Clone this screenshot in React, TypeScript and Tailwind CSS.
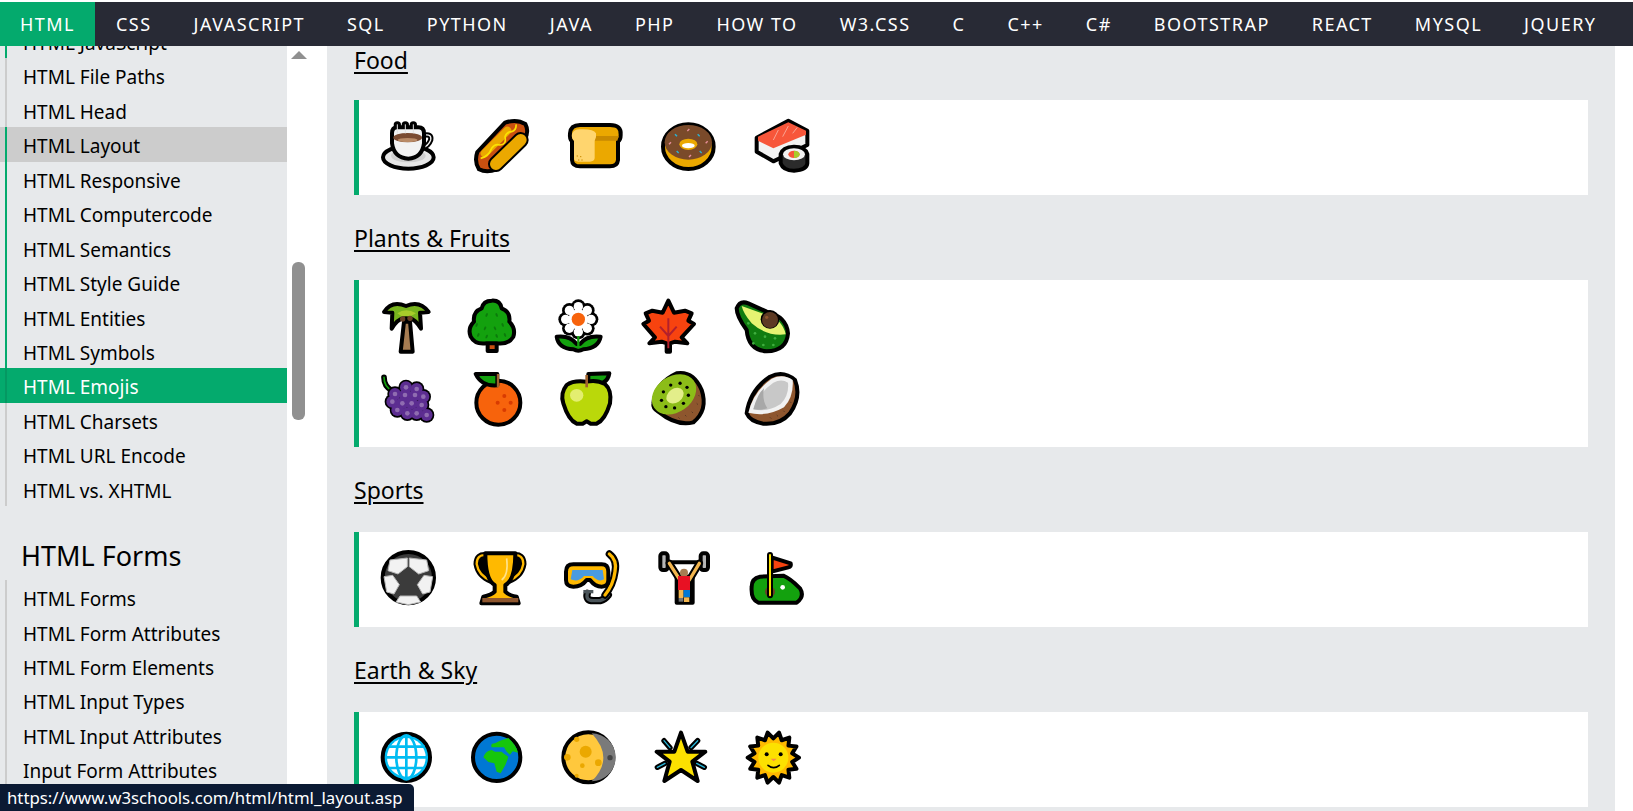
import type { ReactNode } from "react";

const navItems = ["HTML", "CSS", "JAVASCRIPT", "SQL", "PYTHON", "JAVA", "PHP", "HOW TO", "W3.CSS", "C", "C++", "C#", "BOOTSTRAP", "REACT", "MYSQL", "JQUERY"];

const htmlLinks = ["HTML JavaScript", "HTML File Paths", "HTML Head", "HTML Layout", "HTML Responsive", "HTML Computercode", "HTML Semantics", "HTML Style Guide", "HTML Entities", "HTML Symbols", "HTML Emojis", "HTML Charsets", "HTML URL Encode", "HTML vs. XHTML"];
const formLinks = ["HTML Forms", "HTML Form Attributes", "HTML Form Elements", "HTML Input Types", "HTML Input Attributes", "Input Form Attributes"];

const black = { stroke: "#000", strokeWidth: 12, strokeLinejoin: "round" as const, strokeLinecap: "round" as const };

// artwork is drawn in 3x coordinates, x/y is the top left corner of the 60px box
function Emoji({ x, y, className, children }: { x: number; y: number; className: string; children: ReactNode }) {
  return (
    <div className={className}>
      <svg width="60" height="60" viewBox={`${x} ${y} 180 180`} className="block overflow-visible">
        {children}
      </svg>
    </div>
  );
}

function Tube({ d, fill, w }: { d: string; fill: string; w: number }) {
  return (
    <>
      <path d={d} fill="none" stroke="#000" strokeWidth={w + 12} strokeLinecap="round" strokeLinejoin="round" />
      <path d={d} fill="none" stroke={fill} strokeWidth={w} strokeLinecap="round" strokeLinejoin="round" />
    </>
  );
}

function Coffee() {
  return (
    <Emoji x={54} y={78} className="w-[95px]">
      <ellipse cx="145" cy="202" rx="76" ry="34" fill="#e6e6e6" {...black} />
      <ellipse cx="145" cy="197" rx="52" ry="20" fill="#cfcfcf" />
      <Tube d="M190 136 Q216 130 212 150 Q206 168 186 174" fill="#f2f2f2" w={4} />
      <circle cx="112" cy="105" r="11" fill="#000" />
      <circle cx="136" cy="105" r="11" fill="#000" />
      <circle cx="160" cy="105" r="11" fill="#000" />
      <path d="M96 130 Q96 112 112 112 L175 112 Q192 112 192 130 L192 160 Q186 204 145 206 Q102 204 96 160 Z" fill="#f2f2f2" {...black} />
      <ellipse cx="143" cy="143" rx="43" ry="14" fill="#7a4a30" />
      <ellipse cx="143" cy="150" rx="30" ry="6" fill="#b98a66" />
      <path d="M112 130 L112 103 M136 130 L136 103 M160 130 L160 103" stroke="#e2e2e2" strokeWidth="3" fill="none" />
    </Emoji>
  );
}

function Hotdog() {
  return (
    <Emoji x={339} y={78} className="w-[93px]">
      <path d="M352 186 L435 98 Q470 86 496 102 Q508 125 494 148 L410 238 Q380 250 357 238 Q342 215 352 186 Z" fill="#ca5010" {...black} />
      <path d="M374 190 L442 122" stroke="#eba800" strokeWidth="24" strokeLinecap="round" />
      <path d="M362 205 Q385 200 395 175 Q405 160 420 165 Q440 165 435 140 Q440 125 455 125 Q470 120 468 103" fill="none" stroke="#fce100" strokeWidth="5" />
      <Tube d="M408 222 L482 150" fill="#eba800" w={36} />
    </Emoji>
  );
}

function Bread() {
  return (
    <Emoji x={618} y={78} className="w-[93px]">
      <path d="M660 105 L750 105 Q785 105 782 135 Q782 150 774 154 L774 210 Q772 229 750 229 L660 229 Q637 229 636 210 L636 154 Q628 148 630 130 Q632 105 660 105 Z" fill="#eba800" {...black} />
      <path d="M708 138 L776 138 L772 152 L704 152 Z" fill="#c98a00" />
      <path d="M660 118 Q700 116 708 130 Q710 144 704 152 L704 205 Q702 215 690 215 L655 215 Q642 215 642 205 L642 152 Q634 146 636 132 Q640 118 660 118 Z" fill="#ffd56e" />
      <path d="M650 198 h4 M660 200 h4 M654 210 h4 M664 210 h4" stroke="#c98a00" strokeWidth="3" />
    </Emoji>
  );
}

function Donut() {
  const pink = [[985, 120], [930, 160], [990, 198], [1040, 157]];
  const blue = [[1016, 136], [953, 186], [1022, 186], [948, 136]];
  return (
    <Emoji x={897} y={78} className="w-[94px]">
      <ellipse cx="985" cy="170" rx="76" ry="67" fill="#eba800" {...black} />
      <ellipse cx="985" cy="157" rx="71" ry="52" fill="#7a4a2a" />
      <ellipse cx="985" cy="163" rx="27" ry="17" fill="#eba800" />
      <ellipse cx="985" cy="167" rx="19" ry="8" fill="#fff" />
      {pink.map(([a, b]) => (
        <path key={a} d={`M${a - 3} ${b + 3} L${a + 3} ${b - 3}`} stroke="#e8909c" strokeWidth="4" />
      ))}
      {blue.map(([a, b]) => (
        <path key={a} d={`M${a - 3} ${b - 3} L${a + 3} ${b + 3}`} stroke="#27b5d8" strokeWidth="4" />
      ))}
    </Emoji>
  );
}

function Sushi() {
  return (
    <Emoji x={1179} y={78} className="w-[93px]">
      <path d="M1190 143 L1285 92 L1342 122 L1342 165 L1240 214 L1190 185 Z" fill="#f2f2f2" {...black} />
      <path d="M1194 140 L1285 97 L1338 122 L1338 134 L1240 175 L1194 152 Z" fill="#f7563a" />
      <path d="M1240 150 L1255 120 M1268 140 L1285 108 M1298 130 L1312 112" stroke="#f9a493" strokeWidth="3" />
      <path d="M1262 192 L1262 220 Q1270 242 1302 242 Q1340 240 1342 220 L1342 192 Q1335 170 1302 170 Q1268 172 1262 192 Z" fill="#2b2b2b" {...black} />
      <ellipse cx="1302" cy="193" rx="33" ry="18" fill="#f2f2f2" />
      <ellipse cx="1302" cy="193" rx="17" ry="11" fill="#f7563a" />
      <path d="M1302 182 A17 11 0 0 1 1302 204 Z" fill="#a8cc2a" />
    </Emoji>
  );
}

function Palm() {
  return (
    <Emoji x={60} y={48} className="w-[86px]">
      <path d="M122 215 L132 125 L150 125 L158 215 Z" fill="#a67c52" {...black} />
      <path d="M72 96 Q95 60 138 78 Q180 60 206 96 L180 98 L183 146 Q165 118 150 115 L130 115 Q112 118 95 146 L97 98 Z" fill="#78b41e" {...black} />
      <path d="M112 100 Q138 82 168 100 Q150 112 138 108 Q125 112 112 100 Z" fill="#a8cc2a" />
      <circle cx="128" cy="117" r="8" fill="#6b4226" />
      <circle cx="150" cy="115" r="8" fill="#6b4226" />
    </Emoji>
  );
}

function Tree() {
  const leaves = [[380, 105], [410, 105], [350, 135], [428, 135], [375, 145], [405, 145], [355, 165], [380, 170], [410, 168], [435, 165]];
  return (
    <Emoji x={318} y={48} className="w-[87px]">
      <path d="M383 185 L383 213 L410 213 L410 185 Z" fill="#ca5010" {...black} />
      <path d="M395 62 Q420 60 425 85 Q452 95 448 125 Q468 145 460 170 Q445 195 410 190 L380 190 Q345 195 332 170 Q322 145 342 125 Q338 95 365 85 Q370 62 395 62 Z" fill="#13a10e" {...black} />
      {leaves.map(([a, b]) => (
        <ellipse key={`${a}-${b}`} cx={a} cy={b} rx="3" ry="6" fill="#0c7a0c" transform={`rotate(${a < 395 ? 25 : -25} ${a} ${b})`} />
      ))}
    </Emoji>
  );
}

function Flower() {
  const petals = [0, 45, 90, 135, 180, 225, 270, 315].map((deg) => [655 + 38 * Math.cos((deg * Math.PI) / 180), 118 + 38 * Math.sin((deg * Math.PI) / 180)]);
  return (
    <Emoji x={579} y={48} className="w-[87px]">
      {petals.map(([a, b]) => (
        <circle key={a + b} cx={a} cy={b} r="22" fill="#000" />
      ))}
      <path d="M590 170 Q630 165 650 192 L660 192 Q680 165 722 170 Q715 205 670 208 Q655 216 640 208 Q595 205 590 170 Z" fill="#13a10e" {...black} />
      <circle cx="655" cy="118" r="30" fill="#fff" />
      {petals.map(([a, b]) => (
        <circle key={a + b} cx={a} cy={b} r="14" fill="#fff" />
      ))}
      <circle cx="655" cy="118" r="20" fill="#f7630c" />
      <path d="M655 168 L655 205" stroke="#13a10e" strokeWidth="7" />
    </Emoji>
  );
}

function Maple() {
  return (
    <Emoji x={840} y={48} className="w-[93px]">
      <polygon points="925,62 942,98 975,92 995,100 985,122 1002,132 965,172 982,190 945,185 930,190 930,215 920,215 920,190 905,185 868,190 885,172 850,132 867,122 857,100 877,92 908,98" fill="#f7430f" {...black} />
      <path d="M925 115 L925 205 M925 168 L900 140 M925 168 L950 140" stroke="#b3202c" strokeWidth="6" fill="none" />
    </Emoji>
  );
}

function Avocado() {
  return (
    <Emoji x={1119} y={48} className="w-[60px]">
      <path d="M1130 85 Q1140 60 1165 70 L1220 95 Q1280 110 1284 160 Q1280 212 1220 214 Q1165 210 1160 150 Q1130 110 1130 85 Z" fill="#107c10" {...black} />
      <path d="M1145 78 L1215 103 Q1268 118 1277 163 Q1220 170 1175 130 Q1150 100 1145 78 Z" fill="#e6f472" />
      <circle cx="1230" cy="118" r="28" fill="#000" />
      <circle cx="1230" cy="120" r="24" fill="#5d3a24" />
      <circle cx="1220" cy="112" r="5" fill="#8e562e" />
      {[[1165, 130], [1185, 160], [1215, 170], [1245, 175], [1180, 190], [1210, 195], [1240, 195]].map(([a, b]) => (
        <circle key={`${a}-${b}`} cx={a} cy={b} r="4" fill="#3fae3f" />
      ))}
    </Emoji>
  );
}

function Grapes() {
  const berries = [[138, 322], [170, 327], [105, 342], [135, 345], [165, 345], [190, 350], [97, 365], [127, 370], [155, 370], [185, 375], [112, 390], [142, 400], [170, 400], [200, 405]];
  return (
    <Emoji x={57} y={267} className="w-[93px]">
      <Tube d="M72 292 Q72 320 96 332" fill="#13a10e" w={5} />
      {berries.map(([a, b]) => (
        <circle key={`k${a}-${b}`} cx={a} cy={b} r="23" fill="#000" />
      ))}
      {berries.map(([a, b]) => (
        <circle key={`p${a}-${b}`} cx={a} cy={b} r="18" fill="#5c2d91" />
      ))}
      {berries.map(([a, b]) => (
        <circle key={`d${a}-${b}`} cx={a} cy={b} r="7" fill="#8f6cb0" />
      ))}
    </Emoji>
  );
}

function Orange() {
  return (
    <Emoji x={336} y={267} className="w-[87px]">
      <circle cx="415" cy="368" r="66" fill="#f7630c" {...black} />
      <path d="M347 282 L412 282 L412 316 Q365 320 347 282 Z" fill="#13a10e" {...black} />
      <path d="M414 282 L414 322" stroke="#a0632e" strokeWidth="7" />
      {[[433, 348], [413, 368], [452, 368], [433, 390]].map(([a, b]) => (
        <circle key={`${a}-${b}`} cx={a} cy={b} r="6" fill="#d83b01" />
      ))}
    </Emoji>
  );
}

function Apple() {
  return (
    <Emoji x={597} y={267} className="w-[90px]">
      <path d="M685 282 L748 280 Q742 318 685 316 Z" fill="#13a10e" {...black} />
      <path d="M680 305 Q640 300 620 315 Q600 340 610 370 Q625 420 650 431 L668 431 L680 424 L692 431 L710 431 Q735 420 750 370 Q756 330 735 312 Q710 298 680 305 Z" fill="#bad80a" {...black} />
      <ellipse cx="650" cy="346" rx="20" ry="19" fill="#e3ee70" />
      <path d="M680 285 L680 322" stroke="#a0632e" strokeWidth="8" />
    </Emoji>
  );
}

function Kiwi() {
  const seeds = [0, 40, 80, 120, 160, 200, 240, 280, 320].map((deg) => {
    const t = (deg * Math.PI) / 180;
    const px = 44 * Math.cos(t);
    const py = 34 * Math.sin(t);
    return [945 + px * 0.82 + py * 0.57, 347 - px * 0.57 + py * 0.82];
  });
  return (
    <Emoji x={867} y={267} className="w-[94px]">
      <path d="M880 372 Q885 310 950 280 Q1000 272 1025 330 Q1045 390 1000 427 Q950 440 895 395 Q878 385 880 372 Z" fill="#8e562e" {...black} />
      <ellipse cx="942" cy="343" rx="72" ry="54" fill="#8cbd18" transform="rotate(-35 942 343)" />
      <ellipse cx="945" cy="347" rx="28" ry="21" fill="#e3ee8a" transform="rotate(-35 945 347)" />
      {seeds.map(([a, b]) => (
        <circle key={a + b} cx={a} cy={b} r="5" fill="#000" />
      ))}
      <path d="M955 412 l4 4 M975 405 l4 4 M995 395 l4 4 M1010 370 l4 4 M1015 345 l4 4" stroke="#5d3a24" strokeWidth="3" />
    </Emoji>
  );
}

function Coconut() {
  return (
    <Emoji x={1149} y={267} className="w-[60px]">
      <path d="M1160 400 Q1170 330 1230 290 Q1270 270 1305 300 Q1325 350 1290 400 Q1260 435 1210 431 Q1170 425 1160 400 Z" fill="#8e562e" {...black} />
      <path d="M1165 398 Q1180 335 1235 296 Q1270 280 1298 300 Q1302 350 1272 382 Q1220 412 1165 398 Z" fill="#f2f2f2" />
      <path d="M1180 388 Q1192 342 1240 308 Q1265 295 1284 308 Q1288 345 1262 372 Q1222 398 1180 388 Z" fill="#c8c8c8" />
      <path d="M1180 388 Q1192 342 1212 325 Q1205 360 1222 385 Q1200 392 1180 388 Z" fill="#a8a8a8" />
      <path d="M1230 412 l4 4 M1250 405 l4 4 M1270 392 l4 4 M1290 365 l4 4" stroke="#5d3a24" strokeWidth="3" />
    </Emoji>
  );
}

function Ball() {
  const patches = ["M90 90 L142 84 L142 110 L114 132 L84 122 Z", "M148 84 L200 90 L206 122 L176 132 L148 110 Z", "M72 140 L98 136 L118 164 L102 192 L80 186 Z", "M218 140 L192 136 L172 164 L188 192 L210 186 Z", "M120 198 L170 198 L182 216 L145 224 L108 216 Z"];
  return (
    <Emoji x={54} y={54} className="w-[94px]">
      <circle cx="145" cy="143" r="77" fill="#3b3b3b" {...black} />
      {patches.map((d) => (
        <path key={d} d={d} fill="#f2f2f2" stroke="#b5b5b5" strokeWidth="3" strokeLinejoin="round" />
      ))}
    </Emoji>
  );
}

function Trophy() {
  return (
    <Emoji x={336} y={54} className="w-[90px]">
      <path d="M375 82 Q352 76 354 102 Q360 132 392 148 L392 82 Z" fill="#000" />
      <path d="M465 82 Q488 76 486 102 Q480 132 448 148 L448 82 Z" fill="#000" />
      <Tube d="M380 76 Q350 72 350 102 Q356 138 394 152" fill="#ffb900" w={7} />
      <Tube d="M460 76 Q490 72 490 102 Q484 138 446 152" fill="#ffb900" w={7} />
      <path d="M376 70 L466 70 Q466 150 436 165 L436 185 Q445 195 470 200 L476 220 L364 220 L370 200 Q395 195 404 185 L404 165 Q376 150 376 70 Z" fill="#ffb900" {...black} />
      <rect x="367" y="204" width="108" height="13" fill="#8e562e" />
      <path d="M440 85 Q446 135 425 150" stroke="#ffe28a" strokeWidth="5" fill="none" />
    </Emoji>
  );
}

function Mask() {
  return (
    <Emoji x={606} y={54} className="w-[93px]">
      <Tube d="M682 190 Q676 212 700 212 L720 212 Q735 208 745 195" fill="#4a5459" w={10} />
      <Tube d="M748 72 Q772 90 765 125 Q760 165 735 195" fill="#ffb900" w={10} />
      <path d="M640 103 L725 103 Q745 103 745 125 L745 150 Q745 170 725 170 Q705 170 690 150 L680 150 Q665 170 640 170 Q618 170 618 150 L618 125 Q618 103 640 103 Z" fill="#ffb900" {...black} />
      <path d="M637 120 L728 120 L732 148 Q715 158 698 138 L672 138 Q655 158 632 148 Z" fill="#4a9be0" />
      <path d="M670 185 L700 185" stroke="#4a5459" strokeWidth="10" />
    </Emoji>
  );
}

function Lifter() {
  return (
    <Emoji x={885} y={54} className="w-[92px]">
      <path d="M915 97 L1030 97" stroke="#000" strokeWidth="12" />
      <rect x="901" y="70" width="22" height="50" rx="8" fill="#b5b5b5" {...black} />
      <rect x="1022" y="70" width="22" height="50" rx="8" fill="#b5b5b5" {...black} />
      <path d="M928 100 L960 150 M1018 100 L988 150" stroke="#000" strokeWidth="22" strokeLinecap="round" />
      <path d="M950 140 L998 140 L998 218 L950 218 Z" fill="#000" {...black} />
      <path d="M928 100 L960 150 M1018 100 L988 150" stroke="#f3b64f" strokeWidth="10" strokeLinecap="round" />
      <circle cx="972" cy="128" r="12" fill="#a67c52" />
      <rect x="954" y="138" width="36" height="42" fill="#e81123" />
      <rect x="970" y="180" width="20" height="22" fill="#0078d4" />
      <rect x="956" y="180" width="14" height="24" fill="#f3b64f" />
      <rect x="972" y="202" width="16" height="14" fill="#f3b64f" />
      <rect x="956" y="204" width="14" height="11" fill="#737373" />
    </Emoji>
  );
}

function Golf() {
  return (
    <Emoji x={1161} y={54} className="w-[60px]">
      <path d="M1175 170 Q1175 145 1200 140 L1270 137 Q1290 145 1320 175 Q1335 200 1310 218 L1195 218 Q1172 210 1175 170 Z" fill="#13a10e" {...black} />
      <ellipse cx="1230" cy="185" rx="15" ry="15" fill="#6b4226" />
      <circle cx="1268" cy="172" r="7" fill="#fff" />
      <path d="M1235 82 L1292 100 Q1295 110 1285 112 L1235 125 Z" fill="#f7430f" {...black} />
      <Tube d="M1230 75 L1230 196" fill="#fce100" w={6} />
    </Emoji>
  );
}

function Globe() {
  return (
    <Emoji x={57} y={54} className="w-[90px]">
      <circle cx="139" cy="142" r="71" fill="#00bcf2" {...black} />
      <circle cx="139" cy="142" r="58" fill="#fff" />
      <g fill="none" stroke="#00bcf2" strokeWidth="8">
        <ellipse cx="139" cy="142" rx="30" ry="66" />
        <path d="M139 76 L139 208 M75 142 L203 142 M84 110 L194 110 M84 174 L194 174" />
      </g>
    </Emoji>
  );
}

function Earth() {
  return (
    <Emoji x={327} y={54} className="w-[90px]">
      <circle cx="410" cy="142" r="71" fill="#0078d4" {...black} />
      <path d="M370 142 Q376 122 395 120 L405 125 L425 125 L430 130 L445 140 L442 150 L436 165 L422 190 L410 185 L403 160 L385 156 Z" fill="#16c60c" />
      <path d="M395 112 Q390 100 405 100 L420 92 L445 84 Q468 104 474 128 L458 124 L450 134 L440 125 L432 112 L415 112 Z" fill="#16c60c" />
    </Emoji>
  );
}

function Moon() {
  return (
    <Emoji x={597} y={54} className="w-[93px]">
      <circle cx="685" cy="142" r="75" fill="#ffc83d" {...black} />
      <path d="M695 70 A72 72 0 0 1 695 214 Q765 145 695 70 Z" fill="#7a7a7a" />
      {[[677, 125, 18], [715, 158, 10], [667, 167, 7], [622, 142, 10], [650, 88, 8], [650, 197, 6]].map(([a, b, r]) => (
        <circle key={a} cx={a} cy={b} r={r} fill="#eba800" />
      ))}
      <circle cx="750" cy="143" r="8" fill="#444" />
    </Emoji>
  );
}

function Sparkle() {
  return (
    <Emoji x={876} y={54} className="w-[92px]">
      <Tube d="M912 92 L930 113" fill="#27b5d8" w={4} />
      <Tube d="M1013 92 L993 113" fill="#27b5d8" w={4} />
      <Tube d="M892 172 L915 160" fill="#27b5d8" w={4} />
      <Tube d="M1033 172 L1010 160" fill="#27b5d8" w={4} />
      <polygon points="963,68 983,125 1036,125 997,155 1013,213 963,180 913,213 929,155 890,125 943,125" fill="#fce100" {...black} />
    </Emoji>
  );
}

function Sun() {
  const points = Array.from({ length: 28 }, (_, i) => {
    const t = (i * Math.PI) / 14;
    const r = i % 2 === 0 ? 77 : 58;
    return `${1240 + r * Math.cos(t)},${143 + r * Math.sin(t)}`;
  }).join(" ");
  return (
    <Emoji x={1152} y={54} className="w-[60px]">
      <polygon points={points} fill="#ffb900" {...black} />
      <circle cx="1240" cy="143" r="45" fill="#fce100" />
      <circle cx="1220" cy="133" r="6" fill="#000" />
      <circle cx="1262" cy="133" r="6" fill="#000" />
      <path d="M1232 146 L1250 146 L1241 154 Z" fill="#f7894a" />
      <path d="M1224 166 Q1241 180 1258 166" stroke="#000" strokeWidth="5" fill="none" strokeLinecap="round" />
    </Emoji>
  );
}

function SectionTitle({ first, children }: { first?: boolean; children: ReactNode }) {
  return (
    <div className={`h-[85px] text-[23px] leading-[32px] text-black ${first ? "pt-[29px]" : "pt-[27px]"}`}>
      <span className="underline decoration-2 underline-offset-[3px]">{children}</span>
    </div>
  );
}

function SideLink({ label, line }: { label: string; line: string }) {
  const active = label === "HTML Emojis";
  const hover = label === "HTML Layout";
  return (
    <div className={`h-[34.45px] pl-[5px] ${active ? "bg-[#04aa6d]" : hover ? "bg-[#cccccc]" : ""}`}>
      <div className={`h-full border-l-2 pl-[16px] text-[19px] leading-[38px] ${line} ${active ? "text-white" : "text-black"}`}>{label}</div>
    </div>
  );
}

export default function App() {
  return (
    <div className="relative flex h-[811px] flex-col overflow-hidden bg-white pt-[2px] font-['Noto_Sans',sans-serif]">
      <nav className="flex h-[44px] shrink-0 items-center bg-[#282a35] text-[18px] tracking-[1.47px] text-white">
        {navItems.map((item, i) => (
          <a key={item} className={`flex h-full items-center ${i === 0 ? "bg-[#04aa6d] px-[20px]" : "px-[21px]"}`}>
            {item}
          </a>
        ))}
      </nav>

      <div className="flex min-h-0 flex-1">
        <aside className="w-[287px] shrink-0 overflow-hidden bg-[#e7e9eb]">
          <div className="-mt-[22px]">
            {htmlLinks.map((label, i) => (
              <SideLink key={label} label={label} line={i === 1 || i === 2 || i >= 11 ? "border-[#cccccc]" : i === 10 ? "border-[#059862]" : "border-[#04aa6d]"} />
            ))}
            <h3 className="h-[74px] pl-[21px] pt-[30px] text-[27px] leading-[40px] text-black">HTML Forms</h3>
            {formLinks.map((label) => (
              <SideLink key={label} label={label} line="border-[#cccccc]" />
            ))}
          </div>
        </aside>

        <div className="relative w-[40px] shrink-0">
          <div className="absolute left-[4px] top-[5px] h-0 w-0 border-x-[8px] border-b-[8px] border-x-transparent border-b-[#909090]" />
          <div className="absolute left-[5px] top-[216px] h-[158px] w-[13px] rounded-[6px] bg-[#909090]" />
        </div>

        <main className="w-[1288px] shrink-0 overflow-hidden bg-[#e7e9eb] px-[27px]">
          <div className="-mt-[31px]">
            <SectionTitle first>Food</SectionTitle>
            <div className="flex h-[95px] border-l-[5px] border-[#04aa6d] bg-white pl-[19px] pt-[16px]">
              <Coffee />
              <Hotdog />
              <Bread />
              <Donut />
              <Sushi />
            </div>

            <SectionTitle>Plants &amp; Fruits</SectionTitle>
            <div className="flex h-[167px] flex-col gap-[13px] border-l-[5px] border-[#04aa6d] bg-white pt-[16px]">
              <div className="flex pl-[21px]">
                <Palm />
                <Tree />
                <Flower />
                <Maple />
                <Avocado />
              </div>
              <div className="flex pl-[20px]">
                <Grapes />
                <Orange />
                <Apple />
                <Kiwi />
                <Coconut />
              </div>
            </div>

            <SectionTitle>Sports</SectionTitle>
            <div className="flex h-[95px] border-l-[5px] border-[#04aa6d] bg-white pl-[19px] pt-[16px]">
              <Ball />
              <Trophy />
              <Mask />
              <Lifter />
              <Golf />
            </div>

            <SectionTitle>Earth &amp; Sky</SectionTitle>
            <div className="flex h-[95px] border-l-[5px] border-[#04aa6d] bg-white pl-[20px] pt-[16px]">
              <Globe />
              <Earth />
              <Moon />
              <Sparkle />
              <Sun />
            </div>
          </div>
        </main>
      </div>

      <div className="absolute bottom-0 left-0 h-[27px] w-[414px] rounded-tr-[5px] bg-[#0b1a33] pl-[7px] text-[16.8px] leading-[27px] text-white">
        https://www.w3schools.com/html/html_layout.asp
      </div>
    </div>
  );
}
